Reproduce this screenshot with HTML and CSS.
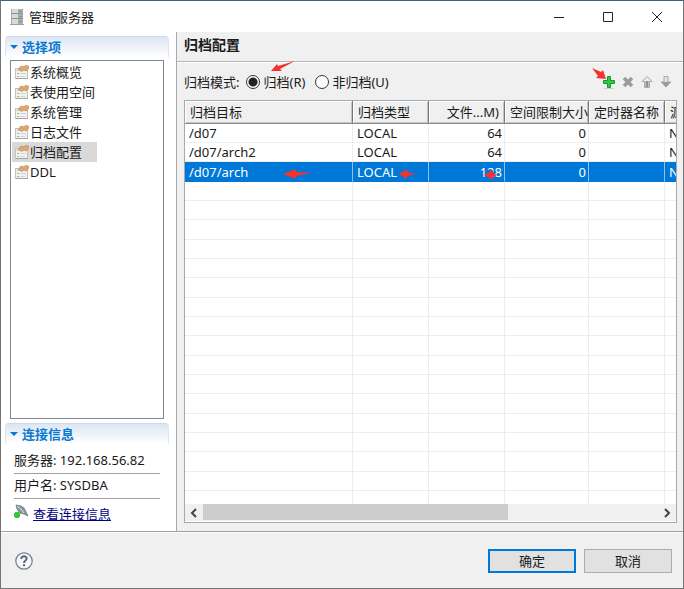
FILE: index.html
```html
<!DOCTYPE html>
<html lang="zh-CN">
<head>
  <meta charset="utf-8">
  <title>管理服务器</title>
  <link rel="stylesheet" href="styles.css">
</head>
<body>
<svg class="defs" width="0" height="0">
  <symbol id="page-icon" viewBox="0 0 14 14">
    <rect x="0.5" y="3.5" width="12" height="10" fill="#f1f1ef" stroke="#c2c2be"/>
    <path d="M1 13.500h12" stroke="#a3a3a0"/>
    <path d="M1 5.500h11" stroke="#d3d8de"/>
    <path d="M2 8.500h2M2 11.500h2" stroke="#9cbd8b"/>
    <path d="M5 8.500h6M5 11.500h5" stroke="#d3d5dc"/>
    <path d="M3 4.500L6 1l3 .8L11 0l3 1.500-1 3-2 1.500-2-1.200-2 1.700z" fill="#dba76f" stroke="#c08a52" stroke-width=".6"/>
  </symbol>
</svg>
<div class="window">
  <div class="titlebar">
    <svg class="server-icon" width="14" height="18" viewBox="0 0 14 18">
      <path d="M1 1h12v15H1z" fill="#a9aeb0"/>
      <path d="M2 1h6v15H2z" fill="#d7dadb"/>
      <path d="M1 5.500h12M1 10.500h12" stroke="#8d9395"/>
      <path d="M9 3.500h3M9 8.500h3M9 13.500h3" stroke="#7f9b88"/>
      <path d="M0 16.500h14" stroke="#9a9fa1"/>
    </svg>
    <h1>管理服务器</h1>
    <button class="win-btn" aria-label="最小化"><svg width="12" height="12"><path d="M1 6.500h10"/></svg></button>
    <button class="win-btn" aria-label="最大化"><svg width="12" height="12"><path d="M1.500 1.500h9v9h-9z"/></svg></button>
    <button class="win-btn" aria-label="关闭"><svg width="12" height="12"><path d="M1 1l10 10M11 1L1 11"/></svg></button>
  </div>

  <div class="main">
    <div class="sidebar">
      <h2 class="section">选择项</h2>
      <ul class="options">
        <li><a href="#"><svg width="14" height="14"><use href="#page-icon"/></svg>系统概览</a></li>
        <li><a href="#"><svg width="14" height="14"><use href="#page-icon"/></svg>表使用空间</a></li>
        <li><a href="#"><svg width="14" height="14"><use href="#page-icon"/></svg>系统管理</a></li>
        <li><a href="#"><svg width="14" height="14"><use href="#page-icon"/></svg>日志文件</a></li>
        <li><a href="#" class="active"><svg width="14" height="14"><use href="#page-icon"/></svg>归档配置</a></li>
        <li><a href="#"><svg width="14" height="14"><use href="#page-icon"/></svg>DDL</a></li>
      </ul>
      <h2 class="section">连接信息</h2>
      <div class="info">
        <p>服务器: 192.168.56.82</p>
        <p>用户名: SYSDBA</p>
        <div class="info-link">
          <svg width="14" height="14" viewBox="0 0 14 14">
            <path d="M2 1l5 1 3 2 2 4 2 4-4-2-4-1-3-4z" fill="#8b979f" stroke="#5f6c75" stroke-width=".7"/>
            <path d="M3 2l4 3 3 4" fill="none" stroke="#dbe2e7"/>
            <circle cx="3" cy="11" r="2.800" fill="#2fd01f" stroke="#1d9c14" stroke-width=".6"/>
          </svg>
          <a href="#">查看连接信息</a>
        </div>
      </div>
    </div>

    <div class="content">
      <h2 class="page-title">归档配置</h2>
      <div class="toolbar">
        <span>归档模式:</span>
        <input type="radio" name="mode" id="mode-on" checked>
        <label for="mode-on">归档(R)</label>
        <input type="radio" name="mode" id="mode-off">
        <label for="mode-off">非归档(U)</label>
        <div class="tools">
          <button aria-label="添加"><svg width="16" height="16" viewBox="0 0 16 16">
            <path d="M3 14.500h10" stroke="#c9d3c9"/>
            <path d="M6.500 2.500h3v4h4v3h-4v4h-3v-4h-4v-3h4z" fill="#35c444" stroke="#149a28"/>
          </svg></button>
          <button aria-label="删除" disabled><svg width="16" height="16" viewBox="0 0 16 16">
            <path d="M4 4l8 8M12 4l-8 8" stroke="#9b9b9b" stroke-width="3.600"/>
          </svg></button>
          <button aria-label="上移" disabled><svg width="16" height="16" viewBox="0 0 16 16">
            <path d="M8 2.500L13 7.500h-2.500v6h-5v-6H3z" fill="#ececec" stroke="#a8a8a8"/>
            <path d="M8 7v6" stroke="#929292" stroke-width="3"/>
          </svg></button>
          <button aria-label="下移" disabled><svg width="16" height="16" viewBox="0 0 16 16">
            <path d="M6 2.500h4V8h3l-5 5-5-5h3z" fill="#e4e4e4" stroke="#a8a8a8"/>
            <path d="M4 8h8l-4 5z" fill="#989898"/>
          </svg></button>
        </div>
      </div>

      <div class="table-box">
        <div class="table-view">
          <table>
            <colgroup>
              <col class="c-target"><col class="c-normal"><col class="c-normal"><col class="c-limit"><col class="c-normal"><col class="c-source">
            </colgroup>
            <thead>
              <tr><th>归档目标</th><th>归档类型</th><th class="num">文件...M)</th><th>空间限制大小(</th><th>定时器名称</th><th>源库</th></tr>
            </thead>
            <tbody>
              <tr><td>/d07</td><td>LOCAL</td><td class="num">64</td><td class="num">0</td><td></td><td>NO</td></tr>
              <tr><td>/d07/arch2</td><td>LOCAL</td><td class="num">64</td><td class="num">0</td><td></td><td>NO</td></tr>
              <tr class="selected"><td>/d07/arch</td><td>LOCAL</td><td class="num">128</td><td class="num">0</td><td></td><td>NO</td></tr>
              <tr><td></td><td></td><td></td><td></td><td></td><td></td></tr>
              <tr><td></td><td></td><td></td><td></td><td></td><td></td></tr>
              <tr><td></td><td></td><td></td><td></td><td></td><td></td></tr>
              <tr><td></td><td></td><td></td><td></td><td></td><td></td></tr>
              <tr><td></td><td></td><td></td><td></td><td></td><td></td></tr>
              <tr><td></td><td></td><td></td><td></td><td></td><td></td></tr>
              <tr><td></td><td></td><td></td><td></td><td></td><td></td></tr>
              <tr><td></td><td></td><td></td><td></td><td></td><td></td></tr>
              <tr><td></td><td></td><td></td><td></td><td></td><td></td></tr>
              <tr><td></td><td></td><td></td><td></td><td></td><td></td></tr>
              <tr><td></td><td></td><td></td><td></td><td></td><td></td></tr>
              <tr><td></td><td></td><td></td><td></td><td></td><td></td></tr>
              <tr><td></td><td></td><td></td><td></td><td></td><td></td></tr>
              <tr><td></td><td></td><td></td><td></td><td></td><td></td></tr>
              <tr><td></td><td></td><td></td><td></td><td></td><td></td></tr>
              <tr><td></td><td></td><td></td><td></td><td></td><td></td></tr>
              <tr><td></td><td></td><td></td><td></td><td></td><td></td></tr>
            </tbody>
          </table>
        </div>
        <div class="scrollbar">
          <button aria-label="向左"><svg width="8" height="10"><path d="M6 1L2 5l4 4"/></svg></button>
          <div class="track"><div class="thumb"></div></div>
          <button aria-label="向右"><svg width="8" height="10"><path d="M2 1l4 4-4 4"/></svg></button>
        </div>
      </div>
    </div>
  </div>

  <div class="footer">
    <button class="help" aria-label="帮助"><svg width="18" height="18" viewBox="0 0 18 18">
      <circle cx="9" cy="9" r="8.200" fill="#f8f8f8" stroke="#6f7b90" stroke-width="1.200"/>
      <path d="M6.300 7c0-3.600 5.400-3.400 5.400-.4C11.700 8.500 9 8.600 9 11" fill="none" stroke="#5b6b85" stroke-width="2"/>
      <rect x="8" y="12.200" width="2" height="2" fill="#5b6b85"/>
    </svg></button>
    <button class="btn primary">确定</button>
    <button class="btn">取消</button>
  </div>

  <!-- red pointer arrows -->
  <svg class="marks" width="684" height="589" viewBox="0 0 684 589">
    <path d="M271 71l6-7 1 2 17-5-15 8 2 2z"/>
    <path d="M606 79l-10-1 2-2-6-8 9 4 2-2z"/>
    <path d="M283 174l13-5v3l16 1-16 3v3z"/>
    <path d="M399 174l8-5v3l9 2-9 2v3z"/>
    <path d="M484 175l9-5v3l4 2-4 2v3z"/>
  </svg>
</div>
</body>
</html>
```

FILE: styles.css
```css
* { margin: 0; padding: 0; box-sizing: border-box; }
body { font: 13px/20px "Noto Sans", "Noto Sans CJK SC", sans-serif; color: #1a1a1a; }
button { font: inherit; color: inherit; border: none; background: none; }
svg { display: block; flex: none; }
.defs { position: absolute; }

.window { position: relative; display: flex; flex-direction: column; height: 100vh; background: #f0f0f0; border: 1px solid #757575; border-top-color: #3f6080; overflow: hidden; }
.titlebar { display: flex; align-items: center; height: 31px; padding: 0 2px 0 9px; background: #fff; flex: none; }
.titlebar h1 { flex: 1; padding-left: 5px; font-size: 13px; font-weight: normal; }
.win-btn { display: flex; align-items: center; justify-content: center; width: 49px; height: 30px; }
.win-btn path { fill: none; stroke: #222; }

.main { display: flex; flex: 1; min-height: 0; border-bottom: 1px solid #a0a0a0; }
.sidebar { display: flex; flex-direction: column; width: 176px; padding: 4px 7px 0 4px; background: #fff; border-right: 1px solid #a9a9a9; }
.section { display: flex; align-items: center; gap: 4px; height: 21px; padding-left: 4px; font-size: 13px; color: #0b78d0; background: linear-gradient(#dce6f3, #fff); border: 1px solid #dfe6f1; border-top-color: #cddbed; border-bottom: none; border-radius: 4px 4px 0 0; flex: none; }
.section::before { content: ""; border: 4px solid transparent; border-top-color: #0b78d0; border-bottom: none; }
.options { flex: 1; margin: 3px 5px 4px; padding-top: 1px; border: 1px solid #828790; list-style: none; }
.options li { display: flex; }
.options a { display: flex; align-items: center; gap: 1px; padding: 0 15px 0 3px; margin-left: 1px; color: #1a1a1a; text-decoration: none; }
.options a.active { background: #d9d9d9; }
.info { padding: 5px 9px 7px; }
.info p { height: 25px; padding-top: 1px; border-bottom: 1px solid #a0a0a0; }
.info-link { display: flex; gap: 5px; padding-top: 5px; }
.info-link a { color: #000080; }

.content { display: flex; flex-direction: column; flex: 1; min-width: 0; padding-bottom: 8px; }
.page-title { height: 30px; padding: 3px 7px 0; font-size: 14px; border-bottom: 1px solid #b4b4b4; box-shadow: 0 1px #fff; flex: none; }
.toolbar { display: flex; align-items: center; height: 38px; padding: 1px 9px 0 7px; flex: none; }
.toolbar input { appearance: none; width: 14px; height: 14px; margin: 0 3px 0 7px; background: #fff; border: 1px solid #333; border-radius: 50%; }
.toolbar input:checked { background: radial-gradient(circle, #222 4px, #fff 5px); }
.toolbar label { margin-right: 3px; }
.tools { display: flex; gap: 3px; margin-left: auto; }

.table-box { display: flex; flex-direction: column; flex: 1; min-height: 0; margin: 0 6px 0 7px; padding-bottom: 1px; background: #fff; border: 1px solid #a5a9b0; }
.table-view { flex: 1; min-height: 0; overflow: hidden; }
table { width: 580px; table-layout: fixed; border-collapse: separate; border-spacing: 0; }
.c-target { width: 168px; }
.c-normal { width: 76px; }
.c-limit { width: 84px; }
.c-source { width: 100px; }
th, td { overflow: hidden; white-space: nowrap; text-align: left; }
th { height: 23px; padding: 0 0 0 5px; font-weight: normal; line-height: 20px; background: #f0f0f0; border-right: 1px solid #777; border-bottom: 1px solid #8c8c8c; box-shadow: inset 1px 1px #fff, inset -1px -1px #c4c4c4; text-overflow: clip; }
th.num { padding-right: 5px; }
td { height: 19px; padding: 0 2px 0 4px; line-height: 18px; border-right: 1px solid #ededed; border-bottom: 1px solid #ededed; }
tr:nth-child(3n) td { height: 20px; }
.num { text-align: right; }
.selected td { color: #fff; background: #0078d7; border-bottom-color: #0078d7; border-right-color: #8fc1ec; }

.scrollbar { display: flex; height: 17px; background: #f0f0f0; flex: none; }
.scrollbar button { display: flex; align-items: center; justify-content: center; width: 18px; }
.scrollbar path { fill: none; stroke: #444; stroke-width: 2; }
.track { flex: 1; }
.thumb { width: 67%; height: 16px; background: #cdcdcd; }

.footer { display: flex; align-items: center; gap: 8px; height: 56px; padding: 0 11px 0 14px; border-top: 1px solid #fff; flex: none; }
.help { margin-right: auto; }
.btn { width: 88px; height: 24px; background: #e1e1e1; border: 1px solid #adadad; }
.btn.primary { border: 2px solid #0078d7; }

.marks { position: absolute; top: -1px; left: -1px; pointer-events: none; }
.marks path { fill: #f5322d; }
```
